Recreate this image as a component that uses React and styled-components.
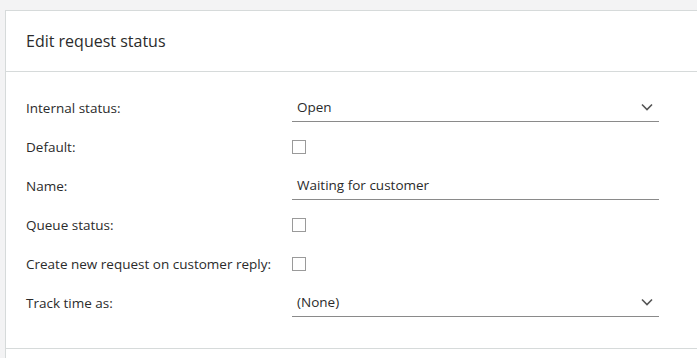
import styled, { createGlobalStyle } from "styled-components";

const Global = createGlobalStyle`
  html, body {
    margin: 0;
    padding: 0;
    background: #f3f3f4;
    font-family: "Open Sans", "Liberation Sans", sans-serif;
    color: #2b2b2b;
    overflow: hidden;
  }
`;

const Page = styled.div`
  padding: 10px 0 0 5px;
  height: 358px;
  box-sizing: border-box;
  display: flex;
  flex-direction: column;
  overflow: hidden;
`;

const Panel = styled.div`
  flex: 1;
  background: white;
  border: 1px solid #d6dada;
  border-right: none;
  border-bottom: none;
`;

const Header = styled.header`
  height: 60px;
  display: flex;
  align-items: center;
  padding: 0 20px;
  border-bottom: 1px solid #d6dada;
  font-size: 16px;
`;

const Body = styled.div`
  padding: 16px 0 26px 20px;
  border-bottom: 1px solid #d6dada;
`;

const Row = styled.div`
  display: grid;
  grid-template-columns: 266px 367px;
  align-items: center;
  height: 39px;
  font-size: 13.5px;
`;

const Label = styled.label``;

const Field = styled.div`
  height: 28px;
  box-sizing: border-box;
  border-bottom: 1px solid #8a8a8a;
  display: flex;
  align-items: center;
  justify-content: space-between;
  padding: 0 6px 0 5px;
`;

const Box = styled.span`
  width: 14px;
  height: 14px;
  box-sizing: border-box;
  border: 1px solid #9a9a9a;
  display: block;
`;

const Chevron = () => (
  <svg width="12" height="8" viewBox="0 0 12 8">
    <path d="M1 1.5l5 5 5-5" fill="none" stroke="#555" strokeWidth="1.6" />
  </svg>
);

const rows = [
  { label: "Internal status:", kind: "select", value: "Open" },
  { label: "Default:", kind: "check" },
  { label: "Name:", kind: "text", value: "Waiting for customer" },
  { label: "Queue status:", kind: "check" },
  { label: "Create new request on customer reply:", kind: "check" },
  { label: "Track time as:", kind: "select", value: "(None)" },
];

export default function App() {
  return (
    <Page>
      <Global />
      <Panel>
        <Header>Edit request status</Header>
        <Body>
          {rows.map((r) => (
            <Row key={r.label}>
              <Label>{r.label}</Label>
              {r.kind === "check" ? (
                <Box />
              ) : (
                <Field>
                  <span>{r.value}</span>
                  {r.kind === "select" && <Chevron />}
                </Field>
              )}
            </Row>
          ))}
        </Body>
      </Panel>
    </Page>
  );
}
